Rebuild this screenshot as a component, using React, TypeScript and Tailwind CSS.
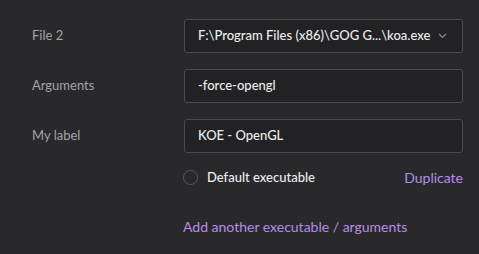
import React from "react";

const Row = ({ label, children }: { label: string; children: React.ReactNode }) => (
  <div className="flex items-center">
    <div className="w-[152px] text-[13px] text-[#a3a3a6]">{label}</div>
    <div className="flex-1">{children}</div>
  </div>
);

const Field = ({ value, select }: { value: string; select?: boolean }) => (
  <div className="flex h-[34px] items-center justify-between rounded-[3px] border border-[#4b4b4f] bg-[#222225] pl-[13px] pr-[15px] text-[13px] font-medium text-[#ececec]">
    <span className="whitespace-nowrap">{value}</span>
    {select && (
      <svg width="9" height="6" viewBox="0 0 9 6" className="text-[#8a8a8d]">
        <path d="M1 1l3.5 3.5L8 1" fill="none" stroke="currentColor" strokeWidth="1.2" />
      </svg>
    )}
  </div>
);

export default function App() {
  return (
    <div
      className="h-[254px] w-[479px] bg-[#29292c] pl-[32px] pr-[16px] pt-[19px]"
      style={{ fontFamily: "Lato, 'Noto Sans', sans-serif" }}
    >
      <div className="flex flex-col gap-[16px]">
        <Row label="File 2">
          <Field value="F:\Program Files (x86)\GOG G...\koa.exe" select />
        </Row>
        <Row label="Arguments">
          <Field value="-force-opengl" />
        </Row>
        <Row label="My label">
          <Field value="KOE - OpenGL" />
        </Row>
      </div>
      <div className="ml-[151px] mt-[14px] flex items-center justify-between">
        <label className="flex items-center gap-[9px] text-[13px] font-medium text-[#ececec]">
          <span className="h-[15px] w-[15px] rounded-full border border-[#5a5a5e]" />
          Default executable
        </label>
        <span className="text-[14px] text-[#b88ce8]">Duplicate</span>
      </div>
      <div className="ml-[151px] mt-[28px] text-[14px] text-[#b88ce8]">
        Add another executable / arguments
      </div>
    </div>
  );
}
